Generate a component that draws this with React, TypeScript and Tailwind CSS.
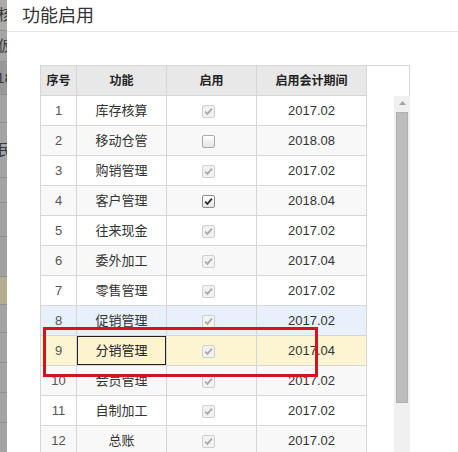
import React from 'react'

type Mark = 'off' | 'on' | 'locked'

interface Row {
  no: number
  name: string
  mark: Mark
  period: string
}

const rows: Row[] = [
  { no: 1, name: '库存核算', mark: 'locked', period: '2017.02' },
  { no: 2, name: '移动仓管', mark: 'off', period: '2018.08' },
  { no: 3, name: '购销管理', mark: 'locked', period: '2017.02' },
  { no: 4, name: '客户管理', mark: 'on', period: '2018.04' },
  { no: 5, name: '往来现金', mark: 'locked', period: '2017.02' },
  { no: 6, name: '委外加工', mark: 'locked', period: '2017.04' },
  { no: 7, name: '零售管理', mark: 'locked', period: '2017.02' },
  { no: 8, name: '促销管理', mark: 'locked', period: '2017.02' },
  { no: 9, name: '分销管理', mark: 'locked', period: '2017.04' },
  { no: 10, name: '会员管理', mark: 'locked', period: '2017.02' },
  { no: 11, name: '自制加工', mark: 'locked', period: '2017.02' },
  { no: 12, name: '总账', mark: 'locked', period: '2017.02' },
]

// the page behind the dialog, only a sliver shows on the left
const behind = [
  { h: 'h-[31px]', bg: 'bg-[#ababab]', ch: '核' },
  { h: 'h-[31px]', bg: 'bg-[#a6a6a6]', ch: '仮' },
  { h: 'h-[33px]', bg: 'bg-[#989898]', ch: '18' },
  { h: 'h-[28px]', bg: 'bg-[#a4a4a4]', ch: '' },
  { h: 'h-[55px]', bg: 'bg-[#a4a4a4]', ch: '民' },
  { h: 'h-[25px]', bg: 'bg-[#a4a4a4]', ch: '' },
  { h: 'h-[34px]', bg: 'bg-[#a2a2a2]', ch: '' },
  { h: 'h-[40px]', bg: 'bg-[#a0a0a0]', ch: '' },
  { h: 'h-[28px]', bg: 'bg-[#b3ad8f]', ch: '' },
  { h: 'h-[28px]', bg: 'bg-[#a4a4a4]', ch: '' },
  { h: 'h-[30px]', bg: 'bg-[#a4a4a4]', ch: '' },
  { h: 'h-[30px]', bg: 'bg-[#a4a4a4]', ch: '' },
  { h: 'h-[30px]', bg: 'bg-[#a4a4a4]', ch: '' },
  { h: 'h-[30px]', bg: 'bg-[#a4a4a4]', ch: '' },
]

function CheckBox({ mark }: { mark: Mark }) {
  if (mark === 'off') {
    return (
      <span className="inline-block w-[13px] h-[13px] rounded-[2px] border border-[#a9a9a9] bg-gradient-to-b from-[#ffffff] to-[#e4e4e4]" />
    )
  }
  const locked = mark === 'locked'
  return (
    <span
      className={
        locked
          ? 'inline-flex items-center justify-center w-[13px] h-[13px] rounded-[2px] border border-[#cfcfcf] bg-[#f2f2f2]'
          : 'inline-flex items-center justify-center w-[13px] h-[13px] rounded-[2px] border border-[#8e8e8e] bg-gradient-to-b from-[#ffffff] to-[#e6e6e6]'
      }
    >
      <svg width="9" height="9" viewBox="0 0 9 9">
        <path
          d="M1.2 4.6 L3.4 6.9 L7.9 1.6"
          fill="none"
          stroke={locked ? '#a9a9a9' : '#2b2b2b'}
          strokeWidth="1.7"
        />
      </svg>
    </span>
  )
}

function rowBg(no: number) {
  if (no === 8) return 'bg-[#e7f0fb]'
  if (no === 9) return 'bg-[#fdf4d2]'
  return no % 2 === 0 ? 'bg-[#f8f8f8]' : 'bg-white'
}

export default function App() {
  const cell = 'border border-[#d6d6d6] h-[30px] p-0 text-center'
  return (
    <div
      className="relative w-[458px] h-[452px] overflow-hidden flex bg-white"
      style={{ fontFamily: '"Liberation Sans", "Noto Sans CJK SC", sans-serif' }}
    >
      {/* background page sliver */}
      <div className="w-[7px] shrink-0 flex flex-col overflow-hidden">
        {behind.map((b, i) => (
          <div
            key={i}
            className={`${b.h} ${b.bg} shrink-0 border-b border-[#8f8f8f] flex items-center justify-end overflow-hidden`}
          >
            <span className="text-[15px] text-[#3a3a3a] whitespace-nowrap mr-[-6px]">{b.ch}</span>
          </div>
        ))}
      </div>

      {/* dialog */}
      <div className="flex-1 flex flex-col bg-white">
        <div className="h-[32px] shrink-0 border-b border-[#e6e6e6] flex items-center pl-[15px]">
          <span className="text-[18px] text-[#333] leading-none">功能启用</span>
        </div>

        <div className="pt-[33px] pl-[33px]">
          <div className="w-[370px] h-[400px] flex border-t border-r border-[#d9d9d9]">
            <table className="w-[326px] border-collapse table-fixed mt-[-1px] self-start">
              <colgroup>
                <col className="w-[36px]" />
                <col className="w-[90px]" />
                <col className="w-[90px]" />
                <col className="w-[110px]" />
              </colgroup>
              <thead>
                <tr className="bg-[#e8e8e8] text-[12px] font-bold text-[#222]">
                  <th className={cell}>序号</th>
                  <th className={cell}>功能</th>
                  <th className={cell}>启用</th>
                  <th className={cell}>启用会计期间</th>
                </tr>
              </thead>
              <tbody>
                {rows.map((r) => (
                  <tr key={r.no} className={`${rowBg(r.no)} text-[13px]`}>
                    <td className={`${cell} text-[#555]`}>{r.no}</td>
                    <td
                      className={
                        r.no === 9
                          ? `${cell} text-[#222] bg-[#fdf3cf] shadow-[inset_0_0_0_1px_#222]`
                          : `${cell} text-[#333]`
                      }
                    >
                      {r.name}
                    </td>
                    <td className={cell}>
                      <div className="flex items-center justify-center pr-[6px] pt-[1px]">
                        <CheckBox mark={r.mark} />
                      </div>
                    </td>
                    <td className={`${cell} text-[#333]`}>{r.period}</td>
                  </tr>
                ))}
              </tbody>
            </table>

            <div className="flex-1 pt-[30px] pl-[27px]">
              <div className="w-[16px] h-[370px] bg-[#f0f0f0] flex flex-col items-center pt-[5px]">
                <svg width="7" height="4" viewBox="0 0 7 4">
                  <path d="M0 4 L3.5 0 L7 4 Z" fill="#a3a3a3" />
                </svg>
                <div className="mt-[7px] w-[12px] h-[291px] bg-[#bdbdbd] border border-[#b0b0b0]" />
              </div>
            </div>
          </div>
        </div>
      </div>

      {/* red highlight */}
      <div className="absolute left-[43px] top-[327px] w-[275px] h-[50px] border-[3px] border-[#d4141b]" />
    </div>
  )
}
